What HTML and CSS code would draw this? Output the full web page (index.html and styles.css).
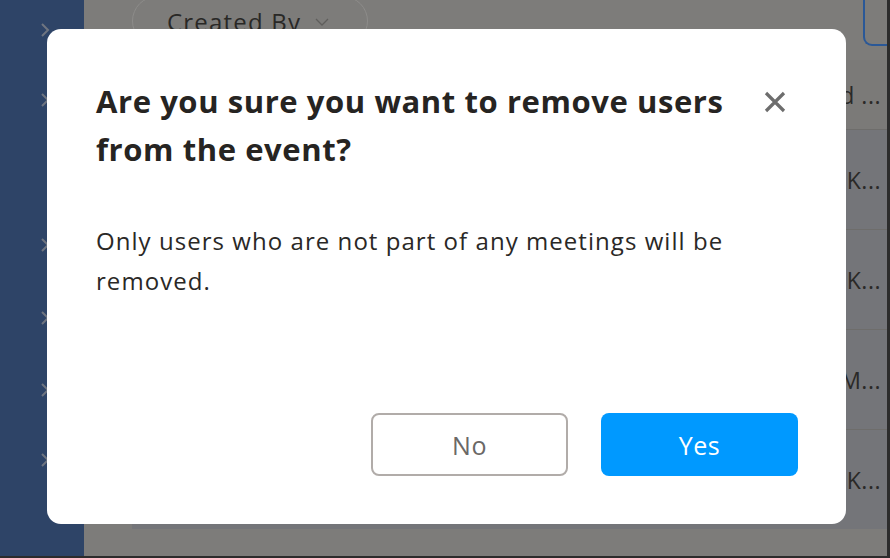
FILE: index.html
```html
<!DOCTYPE html>
<html>
<head>
<meta charset="utf-8">
<link rel="stylesheet" href="styles.css">
</head>
<body>
<div class="app">
  <aside class="sidebar">
    <div class="nav-item n1"><svg width="10" height="14" viewBox="0 0 10 14"><polyline points="2,1 8,7 2,13" /></svg></div>
    <div class="nav-item n2"><svg width="10" height="14" viewBox="0 0 10 14"><polyline points="2,1 8,7 2,13" /></svg></div>
    <div class="nav-item n3"><svg width="10" height="14" viewBox="0 0 10 14"><polyline points="2,1 8,7 2,13" /></svg></div>
    <div class="nav-item n4"><svg width="10" height="14" viewBox="0 0 10 14"><polyline points="2,1 8,7 2,13" /></svg></div>
    <div class="nav-item n5"><svg width="10" height="14" viewBox="0 0 10 14"><polyline points="2,1 8,7 2,13" /></svg></div>
    <div class="nav-item n6"><svg width="10" height="14" viewBox="0 0 10 14"><polyline points="2,1 8,7 2,13" /></svg></div>
  </aside>
  <main class="main">
    <div class="toolbar">
      <div class="pill">Created By <svg class="pill-chev" width="14" height="8" viewBox="0 0 14 8"><polyline points="1,1 7,7 13,1" /></svg></div>
      <div class="topbox"></div>
    </div>
    <div class="table">
      <div class="row head"><span class="cell">Updated ...</span></div>
      <div class="row"><span class="cell">Kevin K...</span></div>
      <div class="row"><span class="cell">Kevin K...</span></div>
      <div class="row"><span class="cell">Mark M...</span></div>
      <div class="row"><span class="cell">Kevin K...</span></div>
    </div>
  </main>
</div>

<div class="overlay">
  <div class="modal">
    <div class="modal-head">
      <h2 class="modal-title">Are you sure you want to remove users from the event?</h2>
      <svg class="close" width="22" height="22" viewBox="0 0 22 22"><path d="M2 2 L20 20 M20 2 L2 20" /></svg>
    </div>
    <p class="modal-text">Only users who are not part of any meetings will be removed.</p>
    <div class="modal-actions">
      <button class="btn btn-no">No</button>
      <button class="btn btn-yes">Yes</button>
    </div>
  </div>
</div>
</body>
</html>
```
FILE: styles.css
```css
html, body {
  margin: 0;
  padding: 0;
  width: 890px;
  height: 558px;
  overflow: hidden;
  font-family: "Open Sans", "Liberation Sans", sans-serif;
}
.app {
  display: flex;
  width: 890px;
  height: 558px;
  background: #2c2c2c;
}
.sidebar {
  width: 84px;
  height: 556px;
  background: #2e4467;
  display: flex;
  flex-direction: column;
}
.nav-item {
  height: 14px;
  padding-left: 40px;
}
.nav-item svg { display: block; }
.nav-item polyline { fill: none; stroke: #6f7580; stroke-width: 2; }
.n1 { margin-top: 23px; }
.n2 { margin-top: 56px; }
.n3 { margin-top: 131px; }
.n4 { margin-top: 59px; }
.n5 { margin-top: 58px; }
.n6 { margin-top: 56px; }

.main {
  width: 803px;
  height: 556px;
  background: #7d7c7a;
  display: flex;
  flex-direction: column;
}
.toolbar {
  height: 60px;
  display: flex;
  justify-content: space-between;
  align-items: flex-start;
}
.pill {
  margin-left: 48px;
  margin-top: -4px;
  width: 200px;
  height: 48px;
  border: 1px solid #8d8c8a;
  border-radius: 26px;
  padding-left: 34px;
  box-sizing: content-box;
  display: flex;
  align-items: center;
  font-size: 24px;
  letter-spacing: 1.2px;
  color: #292826;
}
.pill-chev { margin-left: 14px; margin-top: 2px; }
.pill-chev polyline { fill: none; stroke: #5f5e5c; stroke-width: 1.3; }
.topbox {
  width: 22px;
  height: 44px;
  border: 2px solid #2a5897;
  border-top: none;
  border-right: none;
  border-bottom-left-radius: 9px;
}
.table { display: flex; flex-direction: column; }
.row {
  height: 99px;
  border-top: 1px solid #6e6d6b;
  margin-left: 48px;
  display: flex;
  align-items: center;
  justify-content: flex-end;
  background: #747579;
}
.row.head {
  height: 69px;
  border-top: none;
  background: #7b7a78;
}
.cell {
  font-size: 23px;
  letter-spacing: 0.5px;
  color: #2a2927;
  padding-right: 6px;
  white-space: nowrap;
}

.overlay {
  position: absolute;
  left: 0;
  top: 0;
  width: 890px;
  height: 558px;
}
.modal {
  position: absolute;
  left: 47px;
  top: 29px;
  width: 799px;
  height: 495px;
  box-sizing: border-box;
  background: #ffffff;
  border-radius: 14px;
  padding: 48px 48px 48px 49px;
  display: flex;
  flex-direction: column;
}
.modal-head {
  display: flex;
  align-items: flex-start;
  justify-content: space-between;
}
.modal-title {
  margin: 0;
  width: 650px;
  font-size: 31px;
  font-weight: 700;
  line-height: 48px;
  letter-spacing: 0.58px;
  color: #262422;
}
.close {
  margin-top: 14px;
  margin-right: 12px;
}
.close path { stroke: #6d6d6d; stroke-width: 3.2; fill: none; }
.modal-text {
  margin: 48px 0 0 0;
  width: 650px;
  font-size: 24px;
  line-height: 40px;
  letter-spacing: 1.05px;
  color: #2a2826;
}
.modal-actions {
  margin-top: auto;
  display: flex;
  justify-content: flex-end;
  gap: 33px;
}
.btn {
  width: 197px;
  height: 63px;
  border-radius: 8px;
  font-family: "Open Sans", "Liberation Sans", sans-serif;
  font-size: 25px;
  letter-spacing: 0.5px;
  cursor: pointer;
}
.btn-no {
  background: #ffffff;
  border: 2px solid #b1aca9;
  color: #6b6866;
}
.btn-yes {
  background: #0099ff;
  border: none;
  color: #ffffff;
}
```
